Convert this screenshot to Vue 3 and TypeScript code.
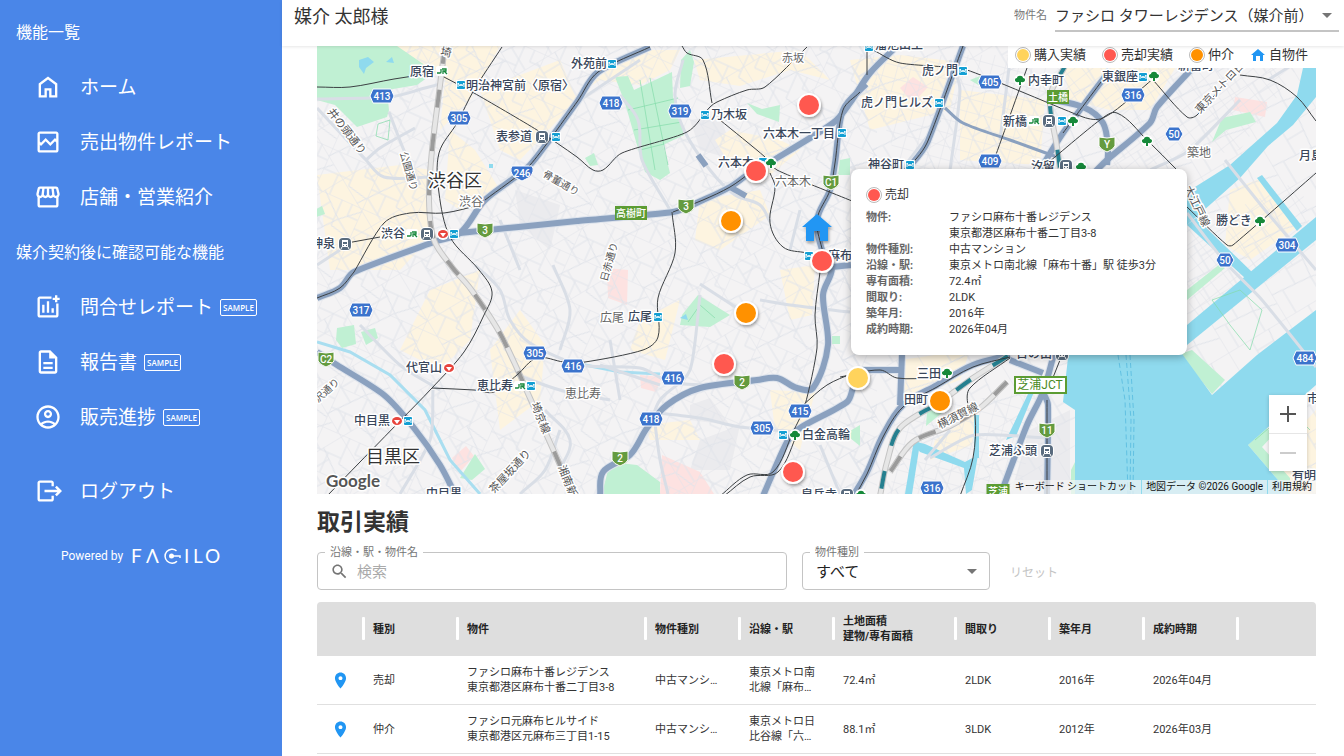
<script setup lang="ts">
import { ref } from 'vue'

interface MenuItem { label: string; icon: string; sample?: boolean }
interface Label { t: string; x: number; y: number; s?: number; r?: number; area?: boolean }
interface Mark { t: string; x: number; y: number; w?: number }
interface Pin { x: number; y: number; c: string }
interface Deal { kind: string; name: string; address: string; type: string; access: string; area: string; plan: string; built: string; closed: string }

const mainMenu: MenuItem[] = [
  { label: 'ホーム', icon: 'M6 19h3v-6h6v6h3v-9l-6-4.5L6 10v9Zm-2 2V9l8-6 8 6v12h-7v-6h-2v6H4Z' },
  { label: '売出物件レポート', icon: 'M19 3H5c-1.100 0-2 .9-2 2v14c0 1.100.9 2 2 2h14c1.100 0 2-.9 2-2V5c0-1.100-.9-2-2-2zm0 16H5v-4.580l1 1.010 4-4 4 4 4-4 1 1.010V19zm0-9.410l-1-1.010-4 4.010-4-4-4 4-1-.99V5h14v4.590z' },
  { label: '店舗・営業紹介', icon: 'M21.900 8.890l-1.050-4.370c-.22-.9-1-1.520-1.910-1.520H5.050c-.9 0-1.690.63-1.900 1.520L2.100 8.890c-.24 1.020-.02 2.060.62 2.880.08.11.19.19.28.29V19c0 1.100.9 2 2 2h14c1.100 0 2-.9 2-2v-6.940c.09-.09.2-.18.28-.28.64-.82.87-1.870.62-2.890zM18.910 5l1.050 4.360c.1.42.01.84-.25 1.170-.14.18-.44.47-.94.47-.61 0-1.140-.49-1.210-1.140L16.980 5h1.930zM13 5h1.960l.54 4.520c.05.39-.07.78-.33 1.070-.22.26-.54.41-.95.41-.67 0-1.220-.59-1.220-1.310V5zM8.490 9.520L9.040 5H11v4.690c0 .72-.55 1.310-1.290 1.310-.34 0-.65-.15-.89-.41-.25-.29-.37-.68-.33-1.070zm-4.450-.16L5.050 5h1.970l-.58 4.860c-.08.65-.6 1.140-1.210 1.140-.49 0-.8-.29-.93-.47-.27-.32-.36-.75-.26-1.170zM5 19v-6.030c.08.01.15.03.23.03.87 0 1.660-.36 2.240-.95.6.6 1.400.95 2.310.95.87 0 1.650-.36 2.230-.93.59.57 1.390.93 2.290.93.84 0 1.640-.35 2.240-.95.58.59 1.370.95 2.240.95.08 0 .15-.02.23-.03V19H5z' },
]
const contractMenu: MenuItem[] = [
  { label: '問合せレポート', sample: true, icon: 'M5 3h10v2H5v14h14V9h2v10c0 1.100-.9 2-2 2H5c-1.100 0-2-.9-2-2V5c0-1.100.9-2 2-2ZM18 2h2v2h2v2h-2v2h-2V6h-2V4h2ZM7 10h2v7H7zM11 7h2v10h-2zM15 13h2v4h-2z' },
  { label: '報告書', sample: true, icon: 'M8 16h8v2H8zm0-4h8v2H8zm6-10H6c-1.100 0-2 .9-2 2v16c0 1.100.89 2 1.990 2H18c1.100 0 2-.9 2-2V8l-6-6zm4 18H6V4h7v5h5v11z' },
  { label: '販売進捗', sample: true, icon: 'M12 2C6.480 2 2 6.480 2 12s4.480 10 10 10 10-4.480 10-10S17.520 2 12 2zM7.350 18.500C8.660 17.560 10.260 17 12 17s3.340.56 4.650 1.500C15.340 19.440 13.740 20 12 20s-3.340-.56-4.650-1.500zm10.790-1.380C16.450 15.800 14.320 15 12 15s-4.450.8-6.140 2.120C4.700 15.730 4 13.950 4 12c0-4.420 3.580-8 8-8s8 3.580 8 8c0 1.950-.7 3.730-1.860 5.120zM12 6c-1.930 0-3.500 1.570-3.500 3.500S10.070 13 12 13s3.500-1.570 3.500-3.500S13.930 6 12 6zm0 5c-.83 0-1.500-.67-1.500-1.500S11.170 8 12 8s1.500.67 1.500 1.500S12.830 11 12 11z' },
]
const logout: MenuItem = { label: 'ログアウト', icon: 'M15 3H5c-1.100 0-2 .9-2 2v14c0 1.100.9 2 2 2h10c1.100 0 2-.9 2-2v-3h-2v3H5V5h10v3h2V5c0-1.100-.9-2-2-2Zm4.500 4.500L18 9l2 2H9v2h11l-2 2 1.500 1.500L24 12Z' }

const legend = [
  { label: '購入実績', kind: 'buy' },
  { label: '売却実績', kind: 'sell' },
  { label: '仲介', kind: 'broker' },
]

const detail = [
  ['物件:', ['ファシロ麻布十番レジデンス', '東京都港区麻布十番二丁目3-8']],
  ['物件種別:', ['中古マンション']],
  ['沿線・駅:', ['東京メトロ南北線「麻布十番」駅 徒歩3分']],
  ['専有面積:', ['72.4㎡']],
  ['間取り:', ['2LDK']],
  ['築年月:', ['2016年']],
  ['成約時期:', ['2026年04月']],
] as [string, string[]][]

const property = ref('p1')
const keyword = ref('')
const kindFilter = ref('all')
const reset = () => { keyword.value = ''; kindFilter.value = 'all' }

const deals: Deal[] = [
  { kind: '売却', name: 'ファシロ麻布十番レジデンス', address: '東京都港区麻布十番二丁目3-8', type: '中古マンション', access: '東京メトロ南北線「麻布十番」駅 徒歩3分', area: '72.4㎡', plan: '2LDK', built: '2016年', closed: '2026年04月' },
  { kind: '仲介', name: 'ファシロ元麻布ヒルサイド', address: '東京都港区元麻布三丁目1-15', type: '中古マンション', access: '東京メトロ日比谷線「六本木」駅 徒歩7分', area: '88.1㎡', plan: '3LDK', built: '2012年', closed: '2026年03月' },
]

// Turns a polyline path (M/L/H/V, absolute) into a softly curved one.
function smooth(d: string): string {
  if (d.includes('Q')) return d
  const tokens = d.match(/[A-Z]|\d+/g) ?? []
  const p: [number, number][] = []
  let mode = 'L'
  for (let i = 0; i < tokens.length; i++) {
    const k = tokens[i]
    if (/[A-Z]/.test(k)) { mode = k; continue }
    const last = p[p.length - 1]
    if (mode === 'H') { p.push([+k, last[1]]); mode = 'L' }
    else if (mode === 'V') { p.push([last[0], +k]); mode = 'L' }
    else { p.push([+k, +tokens[i + 1]]); i++ }
  }
  let out = `M${p[0][0]} ${p[0][1]}`
  for (let i = 0; i < p.length - 1; i++) {
    const a = p[i - 1] ?? p[i], b = p[i], c = p[i + 1], e = p[i + 2] ?? c
    const len = Math.hypot(c[0] - b[0], c[1] - b[1])
    const t1 = Math.min(len / 3, 14) / (Math.hypot(c[0] - a[0], c[1] - a[1]) || 1)
    const t2 = Math.min(len / 3, 14) / (Math.hypot(e[0] - b[0], e[1] - b[1]) || 1)
    out += `C${b[0] + (c[0] - a[0]) * t1} ${b[1] + (c[1] - a[1]) * t1} ${c[0] - (e[0] - b[0]) * t2} ${c[1] - (e[1] - b[1]) * t2} ${c[0]} ${c[1]}`
  }
  return out
}

const pins: Pin[] = [
  { x: 809, y: 105, c: '#ff5850' }, { x: 756, y: 171, c: '#ff5850' }, { x: 731, y: 221, c: '#ff9100' },
  { x: 822, y: 261, c: '#ff5850' }, { x: 746, y: 313, c: '#ff9100' }, { x: 724, y: 364, c: '#ff5850' },
  { x: 858, y: 378, c: '#ffd35c' }, { x: 940, y: 401, c: '#ff9100' }, { x: 793, y: 472, c: '#ff5850' },
]

const labels: Label[] = [
  { t: '原宿', x: 410, y: 76 }, { t: '明治神宮前〈原宿〉', x: 466, y: 90 }, { t: '表参道', x: 496, y: 141 },
  { t: '渋谷', x: 459, y: 206, area: true }, { t: '渋谷', x: 381, y: 238 }, { t: '神泉', x: 311, y: 248 },
  { t: '渋谷区', x: 428, y: 187, s: 18 }, { t: '目黒区', x: 366, y: 463, s: 18 },
  { t: '井の頭通り', x: 327, y: 112, s: 11, r: 52 }, { t: '公園通り', x: 400, y: 153, s: 10, r: 74 },
  { t: '骨董通り', x: 542, y: 176, s: 10, r: 30 }, { t: '埼', x: 440, y: 55, s: 11, r: 10 },
  { t: '外苑前', x: 571, y: 68 }, { t: '赤坂', x: 782, y: 62, s: 11, area: true }, { t: '乃木坂', x: 711, y: 119 },
  { t: '六本木一丁目', x: 763, y: 138 }, { t: '六本木', x: 718, y: 167 }, { t: '六本木', x: 775, y: 186, s: 12, area: true },
  { t: '麻布', x: 828, y: 260 }, { t: '日赤通り', x: 607, y: 282, s: 10, r: -74 },
  { t: '広尾', x: 600, y: 322, area: true }, { t: '広尾', x: 628, y: 321 }, { t: '恵比寿', x: 565, y: 398, area: true },
  { t: '恵比寿', x: 477, y: 390 }, { t: '代官山', x: 406, y: 372 }, { t: '中目黒', x: 354, y: 425 },
  { t: '埼京線', x: 531, y: 404, s: 11, r: 68 }, { t: '湘南新', x: 558, y: 467, s: 11, r: 68 },
  { t: '茶屋坂通り', x: 494, y: 494, s: 11, r: -47 }, { t: '沢通り', x: 318, y: 403, s: 10, r: -42 },
  { t: '中目黒', x: 426, y: 498 }, { t: '白金高輪', x: 802, y: 439 }, { t: '泉岳寺', x: 801, y: 499 },
  { t: '溜池山王', x: 875, y: 49 }, { t: '虎ノ門', x: 922, y: 75 }, { t: '虎ノ門ヒルズ', x: 861, y: 107 }, { t: '神谷町', x: 868, y: 169 },
  { t: '内幸町', x: 1028, y: 85 }, { t: '東銀座', x: 1102, y: 81 }, { t: '新橋', x: 1003, y: 126 }, { t: '汐留', x: 1031, y: 171 },
  { t: '新富町', x: 1178, y: 70 }, { t: '東京メトロ日比', x: 1200, y: 114, s: 11, r: -47 }, { t: '築地', x: 1187, y: 157, area: true },
  { t: '月島', x: 1299, y: 160 }, { t: '大江戸線', x: 1184, y: 188, s: 11, r: 64 }, { t: '勝どき', x: 1216, y: 225 },
  { t: '三田', x: 917, y: 378 }, { t: '田町', x: 904, y: 404 }, { t: '日の出', x: 1016, y: 358 }, { t: '横須賀線', x: 940, y: 429, s: 11, r: -27 },
  { t: '芝浦ふ頭', x: 989, y: 455 }, { t: '市', x: 1307, y: 403 }, { t: '有明', x: 1292, y: 480 },
]
const blue: Mark[] = [
  { t: '413', x: 382, y: 96 }, { t: '305', x: 459, y: 118 }, { t: '246', x: 522, y: 173 }, { t: '418', x: 611, y: 103 },
  { t: '319', x: 680, y: 111 }, { t: '317', x: 361, y: 310 }, { t: '305', x: 535, y: 353 }, { t: '416', x: 573, y: 366 },
  { t: '416', x: 673, y: 378 }, { t: '418', x: 651, y: 419 }, { t: '305', x: 762, y: 428 }, { t: '415', x: 800, y: 411 },
  { t: '405', x: 990, y: 82 }, { t: '316', x: 1133, y: 95 }, { t: '50', x: 1174, y: 134 }, { t: '409', x: 990, y: 161 },
  { t: '50', x: 1225, y: 260 }, { t: '304', x: 1287, y: 245 }, { t: '484', x: 1305, y: 358 }, { t: '316', x: 932, y: 488 },
]
const green: Mark[] = [
  { t: '3', x: 485, y: 230 }, { t: '3', x: 686, y: 206 }, { t: '2', x: 742, y: 382 }, { t: '2', x: 620, y: 458 },
  { t: 'C1', x: 831, y: 182 }, { t: 'Y', x: 1107, y: 144 }, { t: '11', x: 1047, y: 430 }, { t: 'C2', x: 326, y: 359 },
]
const plates: Mark[] = [{ t: '高樹町', x: 631, y: 213, w: 32 }, { t: '土橋', x: 1058, y: 97, w: 22 }, { t: '芝浦', x: 998, y: 491, w: 23 }]
const metro = [[461, 85], [556, 137], [454, 234], [612, 64], [705, 115], [842, 133], [809, 256], [658, 317], [531, 386], [408, 421], [783, 435], [763, 162], [963, 71], [939, 103], [910, 165], [1062, 121], [1143, 77], [869, 47]]
const trains = [[542, 137], [345, 244], [427, 234], [1049, 121], [1066, 166], [1047, 451], [1062, 354], [847, 495]]
const trees = [[771, 163], [795, 435], [1020, 80], [1154, 76], [1147, 141], [1073, 121], [1081, 167], [1260, 221], [947, 373], [861, 495]]
const jr = [[442, 71], [412, 234], [520, 386], [1034, 121]]
const tokyu = [[443, 234], [449, 368], [397, 421]]

const greens = [
  'M317 46H397L435 72 417 85 387 90 389 110 387 117 357 127 335 105 317 100Z',
  'M615 77 628 76 634 90 672 72 673 97 684 135 663 145 670 173 660 180 645 172 637 145 625 103Z',
  'M681 60 690 50 694 62 690 86 680 88Z', 'M698 295 730 315 710 327 680 325 682 315Z',
  'M610 462 637 465 660 482V494H602Z', 'M747 103 762 109 780 105 779 122 757 114Z',
  'M337 328 354 325 356 344 342 348 336 340Z', 'M361 332 375 328 378 338 366 345Z', 'M460 478 475 454 485 469 472 480Z',
  'M840 160 850 158V175H838Z', 'M832 336H840V344H832Z', 'M585 158 594 153 598 165 590 166Z', 'M845 434 860 425V446Z',
  'M927 412 940 404 948 408 926 426Z', 'M970 80 980 76V86Z', 'M1180 354 1192 350 1225 380 1212 394Z',
  'M1187 290 1220 264 1225 268 1187 300Z', 'M1248 445 1266 428 1274 434 1262 447 1290 478 1290 494Z', 'M1071 494V470L1076 460V494Z',
  'M1222 118 1250 112 1256 122 1226 130 1212 142Z', 'M315 210 322 206 325 214 316 217Z',
]
const pinks = ['M452 458 466 446 474 456 460 472Z', 'M662 455 700 472 714 494H660Z', 'M607 268 628 270 627 305 608 298Z', 'M900 88 913 77 928 87 913 103Z', 'M1235 97 1267 102 1265 117 1233 110Z', 'M640 375 662 377 656 392 641 388Z']
const shops = [
  'M395 46H500L470 100 440 130 445 80Z', 'M480 90 560 60 577 100 520 160 500 150Z', 'M317 175 400 165 430 170 428 240 400 270H330Z',
  'M450 130 475 150 500 190 460 210 445 200Z', 'M570 100 620 60 650 50 680 50 670 70 640 85 600 80Z', 'M694 60 800 50 830 80 790 70 740 86 700 80Z',
  'M730 130 780 140 800 150 770 175 730 165 715 140Z', 'M700 200 760 190 770 215 720 250 695 240Z', 'M520 310 545 345 540 400 500 430 490 350Z',
  'M430 290 480 270 470 340 440 370 400 350Z', 'M640 320 680 300 665 360 630 350Z', 'M780 270 815 265 812 315 790 320Z', 'M770 390 815 392 800 450 775 430Z',
  'M850 60 900 55 960 62 950 110 870 130Z', 'M960 90 1045 100 1040 165 960 160Z', 'M1060 50 1180 60 1150 110 1110 110 1070 100Z', 'M1230 190 1262 178 1300 225 1250 260 1225 245Z',
  'M900 360 970 350 960 380 905 400Z', 'M935 440 975 415 972 445 930 460Z', 'M1275 455 1316 410V494H1290Z', 'M645 425 690 420 700 440 650 440Z',
]
const water = [
  'M1303 68H1316V97L1293 125 1268 146 1240 178 1212 203 1187 225V192L1230 165 1250 147 1277 123 1297 95Z',
  'M1316 217V240L1187 345V325Z', 'M1187 225 1196 218 1252 272 1245 278Z', 'M1257 178 1262 175 1302 226 1297 231Z',
  'M1070 340H1172L1212 395 1257 355 1316 310V385L1248 445 1290 494H1075V410L1063 402Z',
  'M905 494 914 440 920 443 912 494Z', 'M912 441 925 444 965 462 978 455 972 490 966 494 964 468 920 452Z', 'M974 415H979V458H974Z', 'M1028 394 1034 392 1016 436 1006 440Z',
  'M359 60 368 57 374 62 366 68 364 74 359 67Z', 'M680 318 686 314 688 320Z', 'M489 164H493V168H489Z', 'M386 62 392 57 394 63Z',
]
const bigRoads = [
  'M317 298 340 288 354 272 434 242 460 233 485 200 530 165 577 102 598 72 650 47',
  'M460 233 577 221 673 212 703 200 730 187 750 173 777 158 833 123 850 103 870 73 897 46',
  'M866 84 843 110 835 163 830 190 817 220 823 253 832 268 823 295 828 345 813 388 797 388 777 378 757 380 700 388 667 405 647 428 630 455 603 472 600 496',
  'M853 388 847 402 800 428 787 442 763 496', 'M317 352 337 365 384 395 414 428 440 465 456 496',
  'M963 46 927 143 905 172', 'M1200 60 1157 107 1150 123 1107 160 1095 172', 'M1047 99 1083 107 1103 123 1108 150 1107 165',
  'M1110 70 1063 133 1040 170', 'M1010 355 973 365 937 385 903 405 883 435 867 472 853 496', 'M902 355 900 405', 'M862 370 902 370',
  'M1055 350 1043 392 1027 425 1000 496', 'M1010 360 1043 373', 'M1043 392 1048 405 1047 496', 'M851 265 832 267',
]
const slimRoads = ['M945 108 963 123 1010 140 1057 157']
const midRoads = [
  'M317 99 390 97 425 88 440 84', 'M317 108 366 160 384 177 430 177', 'M366 160 380 148 415 128', 'M389 112 403 148 420 185',
  'M620 95 638 120 642 160 670 210', 'M683 60 675 95 684 130 710 170 735 195 760 205 770 222', 'M475 265 500 290 510 320 530 343 580 365 640 368 670 382 720 386',
  'M433 390 430 440 400 494', 'M360 325 400 365 440 390', 'M600 365 660 385', 'M700 295 690 370 660 400 650 425', 'M650 412 700 418 740 427 800 432',
  'M545 410 570 440 560 470', 'M517 375 560 390 610 400', 'M950 60 960 90 950 170', 'M900 172 940 120', 'M1187 213 1225 262 1262 300 1316 367',
  'M1225 160 1265 210 1316 270', 'M1150 170 1190 150 1240 100', 'M930 458 975 435 1045 438', 'M925 460 950 430', 'M1000 140 1010 60', 'M560 430 545 470 520 494', 'M655 424 660 460 668 494',
  'M820 445 840 494', 'M760 300 790 305 850 312', 'M700 284 740 310', 'M800 210 790 250', 'M580 100 640 60', 'M317 265 340 250', 'M1268 80 1300 60', 'M553 265 570 310 560 350', 'M500 220 520 270', 'M610 340 620 400',
]
const rails = [
  'M502 47 474 90 457 123 439 153 439 193 450 237 479 270 492 292 484 315 464 352 432 388 399 422 360 462 327 496',
  'M317 87 350 87 394 79 427 74', 'M444 77 474 93 537 130 577 157 593 170 603 170 622 153 687 132 710 107 717 102 747 90 765 87 807 47',
  'M682 46 687 53 703 60 712 103', 'M720 120 765 157 777 170 852 201', 'M770 173 775 187 770 223 783 247 807 253',
  'M672 212 675 253 658 298 658 337 643 350 585 362 564 362 537 358 517 375 494 392 474 390 432 388', 'M347 243 380 237',
  'M354 272 384 223 410 213 444 213 480 205', 'M820 272 815 315 817 348 805 405 793 432 773 472 747 475 720 496', 'M853 373 827 385 803 405',
  'M840 377 880 370 897 378 933 378', 'M1010 358 970 388 968 405 975 415 973 458 960 496', 'M867 50 867 75', 'M873 50 900 63 967 70 1083 117 1103 118 1140 90 1157 75',
  'M1027 68 993 163', 'M1240 75 1270 80 1297 97 1316 121', 'M1153 80 1187 117 1197 115 1233 73', 'M1043 167 1100 120 1117 113 1147 140 1177 170', 'M1187 207 1227 245 1233 245 1316 173',
  'M485 200 530 165 577 102 598 72 650 47', 'M673 212 703 200 730 187 750 173', 'M860 92 843 110 835 163 830 190 817 220 823 253', 'M963 46 927 143 905 172',
  'M1010 357 973 367 937 387 903 407 883 437 867 474 855 496', 'M798 432 778 472 750 477 724 496', 'M1047 400 1047 496', 'M1110 70 1063 133', 'M317 298 340 288 354 272', 'M1062 355 1050 385',
]
const jrLines = ['M445 46 439 93 432 150 429 200 434 240 452 267 470 288 497 328 514 362 530 398 560 465 572 496', 'M1007 382 980 408 950 426 913 442 890 472']
const jrTeal = ['M1008 356 973 378 940 402 900 428 887 462 880 496', 'M1065 66 1050 97 1057 147 1060 168']
</script>

<template>
  <div class="app">
    <nav class="side" aria-label="機能一覧">
      <h2>機能一覧</h2>
      <a v-for="m in mainMenu" :key="m.label" href="#"><svg viewBox="0 0 24 24"><path :d="m.icon" /></svg><span>{{ m.label }}</span></a>
      <h2>媒介契約後に確認可能な機能</h2>
      <a v-for="m in contractMenu" :key="m.label" href="#"><svg viewBox="0 0 24 24"><path :d="m.icon" /></svg><span>{{ m.label }}</span><small>SAMPLE</small></a>
      <a href="#" class="logout"><svg viewBox="0 0 24 24"><path :d="logout.icon" /></svg><span>{{ logout.label }}</span></a>
      <div class="powered">
        <span>Powered by</span>
        <svg class="brand" viewBox="0 0 90 20" role="img" aria-label="FACILO">
          <g class="letters"><text x="0" y="17">F</text><text x="15" y="17">Λ</text><text x="53" y="17">I</text><text x="62" y="17">L</text><text x="74" y="17">O</text></g>
          <path d="M45.500 4.800A7 7 0 1 0 46 15.200" /><path d="M41 10H49V12" /><circle cx="40.500" cy="10" r="2.500" />
        </svg>
      </div>
    </nav>

    <main>
      <header>
        <h1>媒介 太郎様</h1>
        <div class="property">
          <label for="property">物件名</label>
          <div class="select-line">
            <select id="property" v-model="property"><option value="p1">ファシロ タワーレジデンス（媒介前）</option></select>
            <i class="caret"></i>
          </div>
        </div>
      </header>

      <div class="content">
        <section class="map" aria-label="地図">
          <svg class="canvas" viewBox="317 46 999 448" preserveAspectRatio="xMinYMin slice">
            <defs>
              <pattern id="g1" width="52" height="43" patternUnits="userSpaceOnUse" patternTransform="rotate(24)">
                <path d="M0 0H52M0 22H30M0 0V43M30 0V28L52 33M16 22V43M41 0V13H52" />
              </pattern>
              <pattern id="g2" width="67" height="55" patternUnits="userSpaceOnUse" patternTransform="rotate(-31)">
                <path d="M0 0H67M0 28 43 32V55M0 0V55M26 0V30M47 0 43 32 67 38M12 30V55M26 13H46" />
              </pattern>
              <pattern id="g3" width="15" height="11" patternUnits="userSpaceOnUse" patternTransform="rotate(-38)">
                <path d="M0 0H15M0 0V11" />
              </pattern>
              <pattern id="g4" width="13" height="13" patternUnits="userSpaceOnUse" patternTransform="rotate(15)">
                <path d="M0 0H13M0 0V13" />
              </pattern>
              <filter id="sh" x="-30%" y="-30%" width="170%" height="170%"><feDropShadow dx="1" dy="2" stdDeviation="1.500" flood-opacity=".35" /></filter>
            </defs>
            <rect x="317" y="46" width="999" height="448" fill="#f4f3f4" />
            <g fill="#ebebee"><path d="M515 190 560 205 550 250 520 225ZM690 405 710 398 730 425 690 420ZM700 440 740 425 730 470 690 470ZM690 120 720 115 735 160 700 150ZM1030 430 1070 410V494H1010Z" /></g>
            <path v-for="d in shops" :key="d" :d="d" fill="#fdf4e0" />
            <path v-for="d in pinks" :key="d" :d="d" fill="#fde2e1" />
            <rect x="317" y="46" width="560" height="448" fill="url(#g1)" />
            <rect x="317" y="46" width="560" height="448" fill="url(#g2)" />
            <path d="M850 46H1316V494H830V170Z" fill="url(#g2)" />
            <path d="M1060 50H1310L1240 150 1120 170 1060 110ZM1187 230 1300 180 1316 250 1190 330Z" fill="url(#g3)" />
            <path d="M860 55H1050V170H900ZM900 410 1040 390 1020 494H890Z" fill="url(#g4)" />
            <path v-for="d in greens" :key="d" :d="d" fill="#c0f0d3" />
            <g class="creek"><path d="M317 342 350 352 390 375 425 410 450 460 480 494" /><path d="M570 362 620 372 660 374" /></g>
            <path v-for="d in water" :key="d" :d="d" fill="#8fdaee" />
            <g class="ferry"><path d="M1118 355 1125 400 1128 494" /><path d="M1126 355 1131 420 1130 494" /><path d="M1130 355 1134 420 1133 494" /></g>
            <g class="paths"><path d="M390 120 388 140 376 136 378 124 390 120M1212 300 1240 290 1262 310 1250 350 1230 325ZM640 80 655 170M650 78 668 165M628 110 678 98M634 130 682 122M640 150 664 144M1255 440 1290 410 1310 430M688 322 700 305 715 318" /></g>
            <g class="mid"><path v-for="d in midRoads" :key="d" :d="smooth(d)" /></g>
            <g class="trunk-edge"><path v-for="d in bigRoads" :key="d" :d="smooth(d)" /></g>
            <g class="trunk"><path v-for="d in bigRoads" :key="d" :d="smooth(d)" /></g>
            <g class="trunk slim"><path v-for="d in slimRoads" :key="d" :d="smooth(d)" /></g>
            <path d="M698 155 706 166M730 187 746 196" class="tunnel" />
            <g class="jr"><path v-for="d in [...jrLines, ...jrTeal]" :key="d" :d="smooth(d)" /></g>
            <g class="jr-in"><path v-for="d in [...jrLines, ...jrTeal]" :key="d" :d="smooth(d)" /></g>
            <g class="jr-dash"><path v-for="d in jrLines" :key="d" :d="smooth(d)" /></g>
            <g class="jr-dash teal"><path v-for="d in jrTeal" :key="d" :d="smooth(d)" /></g>
            <g class="rail"><path v-for="d in rails" :key="d" :d="smooth(d)" /></g>

            <g class="names">
              <text v-for="(l, i) in labels" :key="i" :x="l.x" :y="l.y" :font-size="l.s ?? 12" :class="{ area: l.area, ward: l.s === 18, road: l.r }" :transform="l.r ? `rotate(${l.r} ${l.x} ${l.y})` : undefined">{{ l.t }}</text>
            </g>
            <g v-for="([x, y], i) in metro" :key="'m' + i" :transform="`translate(${x} ${y})`">
              <rect x="-5" y="-5" width="10" height="10" rx="1" fill="#fff" /><rect x="-4" y="-4" width="8" height="8" rx="1" fill="#139fd3" /><path d="M-3 2V-2L-1 1 0-1 1 1 3-2V2" fill="none" stroke="#fff" />
            </g>
            <g v-for="([x, y], i) in trains" :key="'t' + i" :transform="`translate(${x} ${y})`">
              <rect x="-7" y="-7" width="14" height="14" rx="5" fill="#fff" /><rect x="-6" y="-6" width="12" height="12" rx="4" fill="#596b7e" /><path d="M-3-4H3V3H-3Z" fill="#fff" /><path d="M-2-2H2V0H-2ZM-2 1H-1V2H-2ZM1 1H2V2H1Z" fill="#596b7e" /><path d="M-3 3-4 5M3 3 4 5" stroke="#fff" />
            </g>
            <g v-for="([x, y], i) in trees" :key="'r' + i" :transform="`translate(${x} ${y})`">
              <circle r="6" fill="#fff" /><path d="M-1 5V2C-6 3-6-2-3-2-3-5 3-5 3-2 6-2 6 3 1 2V5Z" fill="#16893a" />
            </g>
            <g v-for="([x, y], i) in jr" :key="'j' + i" :transform="`translate(${x} ${y})`">
              <rect x="-6" y="-5" width="12" height="10" rx="2" fill="#fff" /><path d="M-5 2H-2Q-1 2-1 1V-2M1 3V0H4V-2H0M2 0 5 3" fill="none" stroke="#17883b" stroke-width="1.300" />
            </g>
            <g v-for="([x, y], i) in tokyu" :key="'k' + i" :transform="`translate(${x} ${y})`">
              <circle r="6" fill="#fff" /><ellipse rx="5" ry="4" fill="#e8443c" /><path d="M-3-1H3L0 3Z" fill="#fff" />
            </g>
            <g v-for="(b, i) in blue" :key="'b' + i" :transform="`translate(${b.x} ${b.y})`" class="shield">
              <path v-if="b.t === '246'" d="M-10-7H10Q13-2 8 4L0 8-8 4Q-13-2-10-7Z" fill="#3b73cc" stroke="#fff" />
              <path v-else-if="b.t.length === 2" d="M-5-7H5L9 0 5 7H-5L-9 0Z" fill="#3b73cc" stroke="#fff" />
              <path v-else d="M-9-7H9L12 0 9 7H-9L-12 0Z" fill="#3b73cc" stroke="#fff" />
              <text y="4">{{ b.t }}</text>
            </g>
            <g v-for="(b, i) in green" :key="'g' + i" :transform="`translate(${b.x} ${b.y})`" class="shield">
              <path d="M-8-7Q0-5 8-7V2Q6 6 0 8-6 6-8 2Z" fill="#649b3f" stroke="#fff" /><text y="4">{{ b.t }}</text>
            </g>
            <g v-for="(b, i) in plates" :key="'p' + i" :transform="`translate(${b.x} ${b.y})`" class="shield">
              <rect :x="-(b.w ?? 20) / 2" y="-7" :width="b.w" height="14" fill="#5c9c33" /><text y="4">{{ b.t }}</text>
            </g>
            <g class="jct"><rect x="1015" y="377" width="51" height="16" /><text x="1040" y="389">芝浦JCT</text></g>

            <path d="M817 214 832 227H828V241H820V231H814V241H806V227H802Z" fill="#2196f3" filter="url(#sh)" />
            <g filter="url(#sh)"><circle v-for="p in pins" :key="p.x" :cx="p.x" :cy="p.y" r="11" :fill="p.c" stroke="#fff" stroke-width="2" /></g>
            <text class="google" x="326" y="487">Google</text>
          </svg>

          <ul class="legend">
            <li v-for="l in legend" :key="l.label"><i class="dot" :class="l.kind"></i>{{ l.label }}</li>
            <li><svg viewBox="0 0 16 16"><path d="M8 2 15 8H13V14H10V9H6V14H3V8H1Z" /></svg>自物件</li>
          </ul>

          <article class="popup">
            <h3><i class="dot sell"></i>売却</h3>
            <dl>
              <template v-for="[k, v] in detail" :key="k">
                <dt>{{ k }}</dt>
                <dd><div v-for="line in v" :key="line">{{ line }}</div></dd>
              </template>
            </dl>
          </article>

          <div class="zoom">
            <button type="button" aria-label="拡大"><svg viewBox="0 0 20 20"><path d="M10 2V18M2 10H18" /></svg></button>
            <button type="button" aria-label="縮小" disabled><svg viewBox="0 0 20 20"><path d="M2 10H18" /></svg></button>
          </div>
          <div class="credit"><button type="button">キーボード ショートカット</button><span>地図データ ©2026 Google</span><a href="#">利用規約</a></div>
        </section>

        <h2 class="title">取引実績</h2>
        <form class="filters" @submit.prevent>
          <div class="field search">
            <label for="kw">沿線・駅・物件名</label>
            <svg viewBox="0 0 24 24"><path d="M15.500 14h-.79l-.28-.27C15.410 12.590 16 11.110 16 9.500 16 5.910 13.090 3 9.500 3S3 5.910 3 9.500 5.910 16 9.500 16c1.610 0 3.090-.59 4.230-1.570l.27.28v.79l5 4.990L20.490 19l-4.990-5zm-6 0C7.010 14 5 11.990 5 9.500S7.010 5 9.500 5 14 7.010 14 9.500 11.990 14 9.500 14z" /></svg>
            <input id="kw" v-model="keyword" type="text" placeholder="検索">
          </div>
          <div class="field kind">
            <label for="kind">物件種別</label>
            <select id="kind" v-model="kindFilter"><option value="all">すべて</option></select>
            <i class="caret"></i>
          </div>
          <button type="button" class="reset" @click="reset">リセット</button>
        </form>

        <table>
          <colgroup><col class="c-pin"><col class="c-s"><col class="c-l"><col class="c-s"><col class="c-s"><col class="c-m"><col class="c-s"><col class="c-s"><col class="c-s"><col></colgroup>
          <thead>
            <tr><th></th><th>種別</th><th>物件</th><th>物件種別</th><th>沿線・駅</th><th>土地面積<br>建物/専有面積</th><th>間取り</th><th>築年月</th><th>成約時期</th><th></th></tr>
          </thead>
          <tbody>
            <tr v-for="d in deals" :key="d.name">
              <td class="pin"><svg viewBox="0 0 24 24"><path d="M12 2C8.130 2 5 5.130 5 9c0 5.250 7 13 7 13s7-7.750 7-13c0-3.870-3.130-7-7-7zm0 9.500c-1.380 0-2.500-1.120-2.500-2.500s1.120-2.500 2.500-2.500 2.500 1.120 2.500 2.500-1.120 2.500-2.500 2.500z" /></svg></td>
              <td>{{ d.kind }}</td>
              <td>{{ d.name }}<br>{{ d.address }}</td>
              <td><div class="one">{{ d.type }}</div></td>
              <td><div class="two">{{ d.access }}</div></td>
              <td>{{ d.area }}</td><td>{{ d.plan }}</td><td>{{ d.built }}</td><td>{{ d.closed }}</td><td></td>
            </tr>
          </tbody>
        </table>
      </div>
    </main>
  </div>
</template>

<style>
body { margin: 0; background: #fff; }
</style>

<style scoped>
* { box-sizing: border-box; }
.app { display: flex; min-height: 100vh; font-family: Roboto, "Noto Sans CJK JP", sans-serif; color: #333; font-size: 11px; }
h1, h2, h3, ul, dl, dd { margin: 0; padding: 0; font-weight: 400; }
button, select, input { font: inherit; color: inherit; background: none; border: 0; padding: 0; margin: 0; outline: 0; appearance: none; }

.side { flex: 0 0 282px; background: #4a86e8; color: #fff; padding-top: 4px; }
.side h2 { height: 55px; line-height: 57px; padding-left: 16px; font-size: 16px; }
.side a { display: flex; align-items: center; height: 55px; padding-left: 34px; color: #fff; font-size: 19px; text-decoration: none; }
.side a svg { width: 28px; height: 28px; fill: #fff; margin-right: 18px; }
.side a span { padding-bottom: 2px; }
.side small { width: 37px; height: 17px; margin: 2px 0 0 7px; border: 1px solid #fff; border-radius: 2px; font: 600 8px/15px "Open Sans", sans-serif; text-align: center; }
.side .logout { margin-top: 19px; }
.powered { display: flex; align-items: center; gap: 8px; margin: 28px 0 0 61px; font-size: 12px; height: 20px; }
.brand { width: 90px; height: 20px; fill: none; stroke: #fff; overflow: visible; }
.brand .letters { fill: #fff; stroke: none; font: 400 19px Lato, sans-serif; }
.brand path { stroke-width: 1.5; }
.brand circle { fill: #fff; stroke: none; }

main { flex: 1; min-width: 0; }
header { position: relative; z-index: 2; display: flex; justify-content: space-between; height: 46px; padding: 0 5px 0 12px; background: #fff; box-shadow: 0 1px 3px rgba(0, 0, 0, .1); }
header h1 { font-size: 18px; line-height: 34px; }
.property { display: flex; gap: 8px; height: 32px; }
.property label { font-size: 11px; line-height: 32px; color: #777; }
.select-line { position: relative; width: 284px; border-bottom: 2px solid #c4c4c4; }
.select-line select { width: 100%; height: 32px; font-size: 15px; }
.caret { position: absolute; right: 7px; top: 50%; margin-top: -2px; border: 5px solid transparent; border-top-color: #757575; border-bottom: 0; pointer-events: none; }

.content { padding: 0 28px 0 35px; }
.map { position: relative; height: 448px; overflow: hidden; background: #f4f3f4; }
.canvas { display: block; width: 100%; height: 100%; font-family: Roboto, "Noto Sans CJK JP", sans-serif; }
.canvas pattern path { fill: none; stroke: #e1e4ea; stroke-width: 1; }
.creek path { fill: none; stroke: #a9def0; stroke-width: 3; }
.ferry path { fill: none; stroke: #62c1e2; stroke-dasharray: 5 3; }
.paths path { fill: none; stroke: #83dca9; stroke-width: 1; opacity: .7; }
.mid path { fill: none; stroke: #d9dee6; stroke-width: 3; stroke-linejoin: round; }
.trunk path, .trunk-edge path { fill: none; stroke: #8ba1bf; stroke-width: 6; stroke-linejoin: round; }
.trunk-edge path { stroke: #dde3ec; stroke-width: 8; }
.slim path { stroke-width: 3; }
.tunnel { stroke: #8ba1bf; stroke-width: 6; fill: none; }
.jr path, .jr-in path, .jr-dash path { fill: none; stroke: #c4c4c4; stroke-width: 6; stroke-linejoin: round; }
.jr-in path { stroke: #e6e6e6; stroke-width: 4; }
.jr-dash path { stroke: #9b9b9b; stroke-width: 4; stroke-dasharray: 18 26; }
.jr-dash.teal path { stroke: #257f8f; }
.rail path { fill: none; stroke: #3c4043; stroke-width: 1; stroke-linejoin: round; }
.names text { fill: #39465a; stroke: #fff; stroke-width: 3px; paint-order: stroke; stroke-linejoin: round; font-weight: 500; }
.names .area { fill: #666; font-weight: 400; }
.names .ward { fill: #333; font-weight: 400; }
.names .road { fill: #555; font-weight: 400; }
.shield text { fill: #fff; font-size: 10px; font-weight: 500; text-anchor: middle; }
.jct rect { fill: #fff; stroke: #5c9c33; stroke-width: 2; }
.jct text { fill: #4a8a25; font-size: 12px; text-anchor: middle; }
.google { font: 700 17px Lato, sans-serif; fill: #555; stroke: #fff; stroke-width: 3px; paint-order: stroke; }

.legend { position: absolute; top: 0; right: 0; display: flex; gap: 16px; height: 22px; padding: 0 8px 4px 7px; background: #fff; list-style: none; font-size: 13px; }
.legend li { display: flex; align-items: center; gap: 3px; line-height: 18px; }
.legend svg { width: 16px; height: 16px; fill: #2196f3; }
.dot { width: 16px; height: 16px; border: 1px solid #bbb; border-radius: 50%; padding: 1px; background-clip: content-box; background-color: #ffd35c; }
.dot.sell { background-color: #ff5850; }
.dot.broker { background-color: #ff9100; }

.popup { position: absolute; left: 534px; top: 123px; width: 336px; height: 186px; padding: 17px 15px; border-radius: 8px; background: #fff; box-shadow: 0 2px 8px rgba(0, 0, 0, .3); }
.popup h3 { display: flex; align-items: center; gap: 3px; font-size: 12px; line-height: 18px; margin-bottom: 6px; }
.popup dl { display: grid; grid-template-columns: 83px 1fr; line-height: 16px; }
.popup dt { font-weight: 700; color: #666; }
.popup dd { white-space: nowrap; }

.zoom { position: absolute; right: 9px; bottom: 23px; width: 38px; background: #fff; box-shadow: 0 1px 4px rgba(0, 0, 0, .2); }
.zoom button { display: block; width: 38px; height: 38px; padding: 9px; }
.zoom button + button { border-top: 1px solid #e6e6e6; }
.zoom svg { display: block; width: 20px; height: 20px; stroke: #555; stroke-width: 2; }
.zoom button:disabled svg { stroke: #ccc; }
.credit { position: absolute; right: 0; bottom: 0; display: flex; height: 14px; }
.credit > * { padding: 0 4px; background: rgba(245, 245, 245, .7); font-size: 10px; line-height: 14px; color: #111; text-decoration: none; margin-left: 1px; }

.title { padding-top: 12px; height: 58px; font-size: 23px; line-height: 34px; font-weight: 700; }
.filters { display: flex; align-items: center; gap: 15px; margin-bottom: 12px; height: 38px; }
.field { position: relative; display: flex; align-items: center; height: 38px; border: 1px solid #c4c4c4; border-radius: 4px; font-size: 15px; }
.field label { position: absolute; top: -8px; left: 7px; padding: 0 5px; background: #fff; font-size: 11px; line-height: 16px; color: #757575; }
.search { flex: 0 1 470px; padding: 0 12px; }
.search svg { width: 19px; height: 19px; fill: #757575; margin-right: 8px; }
.search input { flex: 1; min-width: 0; height: 36px; padding-top: 1px; }
.search input::placeholder { color: #aaa; }
.kind { flex: 0 1 188px; }
.kind select { width: 100%; height: 36px; padding: 1px 0 0 13px; color: #222; }
.kind .caret { right: 12px; }
.reset { padding: 0 5px; font-size: 12px; color: #c4c4c4; }

table { width: 100%; table-layout: fixed; border-spacing: 0; line-height: 15px; }
.c-pin { width: 46px; } .c-s { width: 94px; } .c-l { width: 188px; } .c-m { width: 122px; }
th { position: relative; height: 54px; padding: 0 0 0 10px; background: #dedede; text-align: left; font-weight: 700; color: #222; white-space: nowrap; }
th:first-child { border-radius: 4px 0 0 0; }
th:last-child { border-radius: 0 4px 0 0; }
th + th::before { content: ""; position: absolute; left: -1px; top: 15px; width: 3px; height: 23px; border-radius: 1px; background: #fff; }
td { height: 49px; padding: 0 14px 0 10px; border-bottom: 1px solid #e0e0e0; }
td.pin { padding: 0 0 0 14px; }
.pin svg { display: block; width: 19px; height: 19px; fill: #2196f3; }
.one { overflow: hidden; white-space: nowrap; text-overflow: ellipsis; }
.two { display: -webkit-box; -webkit-box-orient: vertical; -webkit-line-clamp: 2; overflow: hidden; }
</style>
